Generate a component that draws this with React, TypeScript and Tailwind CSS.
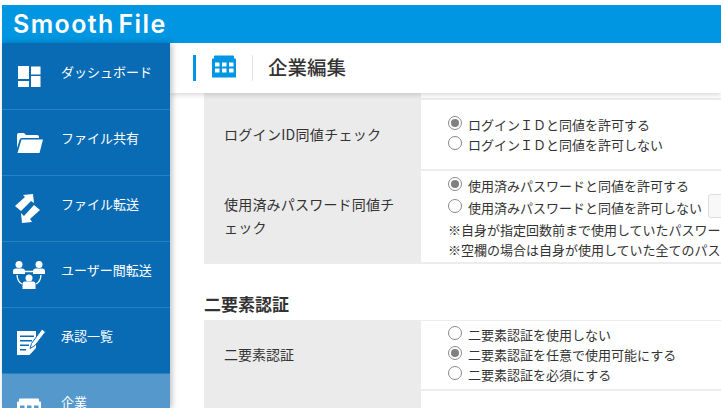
//company edit page
import React from "react";

const DashIcon = () => (
  <svg width="36" height="32" viewBox="0 0 36 32" fill="white">
    <rect x="7" y="5" width="11" height="13" />
    <rect x="20" y="5.500" width="9.500" height="8" />
    <rect x="7" y="20" width="11" height="6" />
    <rect x="20" y="15" width="9.500" height="11" />
  </svg>
);

const FolderIcon = () => (
  <svg width="36" height="32" viewBox="0 0 36 32" fill="white">
    <path d="M6 8 Q6 6 8 6 H13 L15 8 H26 Q28 8 28 10 V11 H11 Q9 11 8.500 13 L6 21 Z" />
    <path d="M10.500 12.500 H32 L28.500 26 H6.500 Z" />
  </svg>
);

const TransferIcon = () => (
  <svg width="36" height="32" viewBox="0 0 36 32" fill="white">
    <path d="M4 13 L14 4 L12 2 L22 1 L23 10 L20 8 L10 18 Z" />
    <path d="M29 17 L19 26 L21 29 L11 30 L10 20 L13 23 L23 12 Z" />
  </svg>
);

const UsersIcon = () => (
  <svg width="36" height="32" viewBox="0 0 36 32" fill="white">
    <circle cx="8" cy="5.500" r="3.500" />
    <circle cx="28" cy="5.500" r="3.500" />
    <path d="M2 15 V12 Q2 9.500 5 9.500 H11 Q14 9.500 14 12 V15 Z" />
    <path d="M22 15 V12 Q22 9.500 25 9.500 H31 Q34 9.500 34 12 V15 Z" />
    <circle cx="18" cy="19" r="3.500" />
    <path d="M11.500 30 V25 Q11.500 22.500 14 22.500 H22 Q24.500 22.500 24.500 25 V30 Z" />
    <path d="M14 12.500 H22 M6 16 Q6.500 23 11 25 M30 16 Q29.500 23 25 25" fill="none" stroke="white" strokeWidth="1.300" />
  </svg>
);

const NoteIcon = () => (
  <svg width="36" height="32" viewBox="0 0 36 32" fill="white">
    <path
      fillRule="evenodd"
      d="M6 6 H25 V23 L18.500 30 H6 Z M9 10.500 V12 H23 V10.500 Z M9 15 V16.500 H21 V15 Z M9 19.500 V21 H18 V19.500 Z M9 24 V25.500 H15 V24 Z"
    />
    <path d="M19 23.500 L20.500 18.500 L31 4 L34.500 7 L24 20.500 Z" stroke="#0a6bb5" strokeWidth="1" />
  </svg>
);

const BuildingIcon = ({ color }: { color: string }) => (
  <svg width="24" height="23" viewBox="0 0 24 22" fill={color}>
    <path
      fillRule="evenodd"
      d="M3 0 H21 Q22 0 22 1 V3 H23 Q24 3 24 4 V22 H0 V4 Q0 3 1 3 H2 V1 Q2 0 3 0 Z M3 7 V11 H7.500 V7 Z M10 7 V11 H14.500 V7 Z M17 7 V11 H21.500 V7 Z M3 13 V17 H7.500 V13 Z M10 13 V17 H14.500 V13 Z M17 13 V17 H21.500 V13 Z"
    />
  </svg>
);

const menu = [
  { label: "ダッシュボード", icon: <DashIcon /> },
  { label: "ファイル共有", icon: <FolderIcon /> },
  { label: "ファイル転送", icon: <TransferIcon /> },
  { label: "ユーザー間転送", icon: <UsersIcon /> },
  { label: "承認一覧", icon: <NoteIcon /> },
];

const Radio = ({ checked, label }: { checked?: boolean; label: string }) => (
  <div className="flex items-center gap-[6px] h-[20px] whitespace-nowrap">
    <span className="w-[14px] h-[14px] shrink-0 rounded-full border border-[#8a8a8a] bg-white flex items-center justify-center">
      {checked && <span className="w-[8px] h-[8px] rounded-full bg-[#808080]" />}
    </span>
    <span className="mt-[4px]">{label}</span>
  </div>
);

const App = () => {
  return (
    <div className="w-[721px] h-[408px] overflow-hidden bg-white pt-[5px] pl-[2px] flex flex-col font-['Noto_Sans_CJK_JP','Liberation_Sans',sans-serif]">
      <header className="h-[38px] shrink-0 bg-[#0096e1] flex items-center pl-[11px]">
        <span className="font-['Inter',sans-serif] text-[25px] font-semibold text-white tracking-[1.4px] [word-spacing:-4px] leading-none">
          Smooth File
        </span>
      </header>
      <div className="flex flex-1 min-h-0">
        <nav className="w-[168px] shrink-0 bg-[#0a6bb5] text-[13px] text-white pt-px shadow-[2px_0_6px_rgba(0,0,0,0.25)] z-10">
          {menu.map((m) => (
            <div key={m.label} className="h-[66px] flex items-center border-b border-[#2a80c4] pb-[9px]">
              <span className="w-[54px] mr-[5px] mt-[10px] flex justify-center">{m.icon}</span>
              <span>{m.label}</span>
            </div>
          ))}
          <div className="h-[66px] bg-[#5599cc] flex items-start pt-[18px]">
            <span className="w-[54px] mr-[5px] mt-[6px] flex justify-center">
              <BuildingIcon color="white" />
            </span>
            <span>企業</span>
          </div>
        </nav>
        <main className="flex-1 min-w-0 flex flex-col overflow-hidden">
          <div className="h-[50px] shrink-0 bg-white flex items-center pl-[23px] shadow-[0_2px_5px_rgba(0,0,0,0.15)] z-[5]">
            <span className="w-[3px] h-[26px] bg-[#0096e1]" />
            <span className="ml-[16px] mb-[3px]">
              <BuildingIcon color="#0096e1" />
            </span>
            <span className="w-px h-[26px] bg-[#e4e4e4] ml-[16px]" />
            <h1 className="ml-[15px] text-[19.500px] font-medium text-[#333] mb-[2px]">企業編集</h1>
          </div>
          <div className="flex-1 min-h-0 pl-[34px] text-[13px] text-[#333] overflow-hidden">
            <div className="w-[700px]">
              <div className="flex h-[7px] border-b-2 border-[#ececec]">
                <div className="w-[217px] bg-[#ebebeb]" />
              </div>
              <div className="flex h-[71px] border-b-2 border-[#ececec]">
                <div className="w-[217px] bg-[#ebebeb] flex items-center pl-[20px] text-[14px] tracking-[0.3px]">
                  ログインID同値チェック
                </div>
                <div className="pl-[27px] pt-[13px]">
                  <Radio checked label="ログインＩＤと同値を許可する" />
                  <Radio label="ログインＩＤと同値を許可しない" />
                </div>
              </div>
              <div className="flex h-[93px] border-b-2 border-[#ececec]">
                <div className="w-[217px] bg-[#ebebeb] flex items-center pl-[20px] pr-[20px] pb-[1px] text-[14px] tracking-[0.2px] leading-[23px]">
                  使用済みパスワード同値チェック
                </div>
                <div className="pl-[27px] pt-[3px] whitespace-nowrap leading-[20px]">
                  <Radio checked label="使用済みパスワードと同値を許可する" />
                  <div className="flex items-center">
                    <Radio label="使用済みパスワードと同値を許可しない" />
                    <span className="ml-[6px] w-[60px] h-[24px] rounded-[3px] border border-[#ddd] bg-[#f8f8f8]" />
                  </div>
                  <div className="mt-[2px]">※自身が指定回数前まで使用していたパスワードは使用できません</div>
                  <div>※空欄の場合は自身が使用していた全てのパスワードが対象です</div>
                </div>
              </div>
              <h2 className="text-[17px] font-bold text-[#333] leading-[24px] mt-[28px] mb-[4px]">二要素認証</h2>
              <div className="flex h-[71px] border-t border-b-2 border-[#ececec]">
                <div className="w-[217px] bg-[#ebebeb] flex items-center pl-[20px] pb-[1px] text-[14px]">二要素認証</div>
                <div className="pl-[27px] pt-[2px]">
                  <Radio label="二要素認証を使用しない" />
                  <Radio checked label="二要素認証を任意で使用可能にする" />
                  <Radio label="二要素認証を必須にする" />
                </div>
              </div>
              <div className="flex h-[40px]">
                <div className="w-[217px] bg-[#ebebeb]" />
              </div>
            </div>
          </div>
        </main>
      </div>
    </div>
  );
};

export default App;
